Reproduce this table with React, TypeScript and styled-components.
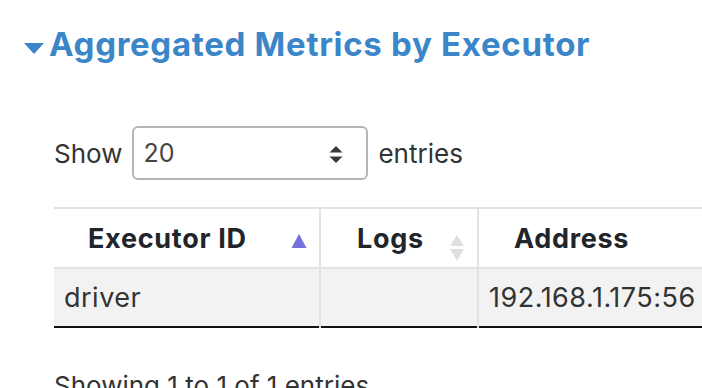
import styled, { createGlobalStyle } from "styled-components";

const GlobalStyle = createGlobalStyle`
  html, body {
    margin: 0;
    padding: 0;
    overflow: hidden;
    background: #fff;
  }
  body {
    font-family: Inter, "Noto Sans", sans-serif;
    color: #333;
  }
`;

const Page = styled.div`
  width: 702px;
  height: 388px;
  overflow: hidden;
  padding: 24px 0 0 24px;
  box-sizing: border-box;
`;

const Heading = styled.h4`
  display: flex;
  align-items: center;
  gap: 5px;
  margin: 0;
  height: 40px;
  font-size: 33px;
  font-weight: 700;
  letter-spacing: 0.7px;
  color: #3b86c9;
  cursor: pointer;
`;

const Caret = styled.svg`
  width: 20px;
  height: 11px;
  margin-top: 8px;
  flex: none;
`;

const Section = styled.div`
  padding-left: 30px;
`;

const Controls = styled.label`
  display: flex;
  align-items: center;
  gap: 10px;
  margin-top: 62px;
  font-size: 26px;
  color: #333;
`;

const SelectBox = styled.div`
  position: relative;
  width: 236px;
  height: 54px;
  box-sizing: border-box;
  border: 2px solid #b5b5b5;
  border-radius: 6px;
  display: flex;
  align-items: center;
  padding-left: 9px;
  font-size: 25px;
  color: #444;
`;

const Stepper = styled.svg`
  position: absolute;
  right: 23px;
  top: 18px;
  width: 14px;
  height: 17px;
`;

const Table = styled.table`
  margin-top: 27px;
  border-collapse: collapse;
  table-layout: fixed;
  width: 900px;
  font-size: 27px;
`;

const HeadCell = styled.th<{ $w: number; $pad: number }>`
  position: relative;
  box-sizing: border-box;
  width: ${(p) => p.$w}px;
  height: 60px;
  padding: 0 0 0 ${(p) => p.$pad}px;
  text-align: left;
  letter-spacing: 0.7px;
  font-weight: 700;
  color: #212529;
  border: 2px solid #e2e2e2;
  border-left: 0;
  &:not(:first-child) {
    border-left: 2px solid #e2e2e2;
  }
`;

const SortIcon = styled.svg`
  position: absolute;
  right: 12px;
  top: 25px;
  width: 16px;
  height: 30px;
`;

const Row = styled.tr`
  background: #f2f2f2;
  border-bottom: 2px solid #111;
`;

const Cell = styled.td`
  height: 59px;
  box-sizing: border-box;
  padding: 0 0 0 10px;
  white-space: nowrap;
  overflow: hidden;
  letter-spacing: 0.5px;
  color: #333;
  border-left: 2px solid #e2e2e2;
  &:first-child {
    border-left: 0;
  }
`;

const Info = styled.div`
  margin-top: 42px;
  font-size: 26px;
  color: #333;
`;

type Sort = "asc" | "none";

const SortArrows = ({ state }: { state: Sort }) => (
  <SortIcon viewBox="0 0 16 30">
    {state === "asc" ? (
      <polygon points="8,0 15.5,14 0.5,14" fill="#7272da" />
    ) : (
      <>
        <polygon points="8,1 15,12 1,12" fill="#e0e0e0" />
        <polygon points="1,15 15,15 8,27" fill="#e0e0e0" />
      </>
    )}
  </SortIcon>
);

const columns: { label: string; w: number; pad: number; sort?: Sort }[] = [
  { label: "Executor ID", w: 266, pad: 34, sort: "asc" },
  { label: "Logs", w: 158, pad: 36, sort: "none" },
  { label: "Address", w: 476, pad: 35 },
];

export default function App() {
  return (
    <Page>
      <GlobalStyle />
      <Heading>
        <Caret viewBox="0 0 20 11">
          <polygon points="0,0 20,0 10,11" fill="#3b86c9" />
        </Caret>
        Aggregated Metrics by Executor
      </Heading>
      <Section>
        <Controls>
          Show
          <SelectBox>
            20
            <Stepper viewBox="0 0 14 17">
              <polygon points="7,0 13.5,6.5 0.5,6.5" fill="#343a40" />
              <polygon points="0.5,10.5 13.5,10.5 7,17" fill="#343a40" />
            </Stepper>
          </SelectBox>
          entries
        </Controls>
        <Table>
          <thead>
            <tr>
              {columns.map((c) => (
                <HeadCell key={c.label} $w={c.w} $pad={c.pad}>
                  {c.label}
                  {c.sort && <SortArrows state={c.sort} />}
                </HeadCell>
              ))}
            </tr>
          </thead>
          <tbody>
            <Row>
              <Cell>driver</Cell>
              <Cell></Cell>
              <Cell>192.168.1.175:56</Cell>
            </Row>
          </tbody>
        </Table>
        <Info>Showing 1 to 1 of 1 entries</Info>
      </Section>
    </Page>
  );
}
